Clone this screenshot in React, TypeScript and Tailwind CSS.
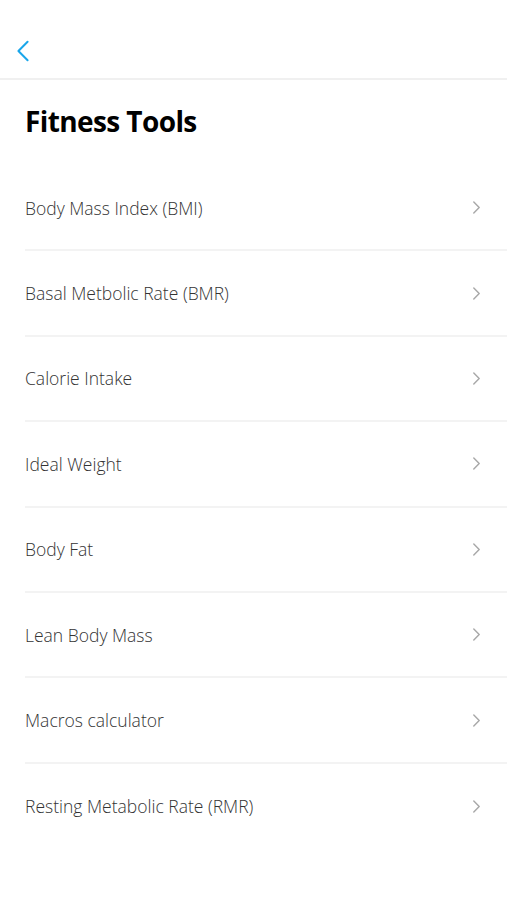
const tools = [
  "Body Mass Index (BMI)",
  "Basal Metbolic Rate (BMR)",
  "Calorie Intake",
  "Ideal Weight",
  "Body Fat",
  "Lean Body Mass",
  "Macros calculator",
  "Resting Metabolic Rate (RMR)",
];

function Chevron({ className }: { className?: string }) {
  return (
    <svg viewBox="0 0 10 16" className={className} fill="none" stroke="currentColor" strokeWidth={1.6} strokeLinecap="round" strokeLinejoin="round">
      <path d="M2 2l6 6-6 6" />
    </svg>
  );
}

export default function App() {
  return (
    <div className="min-h-[900px] w-full bg-white font-['Open_Sans',sans-serif]">
      <header className="flex h-[80px] items-center border-b-2 border-[#f0f0f0] pl-[16px]">
        <svg viewBox="0 0 14 24" className="mt-[24px] h-[22px] w-[14px] text-[#1aa6ea]" fill="none" stroke="currentColor" strokeWidth={2.2} strokeLinecap="round" strokeLinejoin="round">
          <path d="M12 2L2 12l10 10" />
        </svg>
      </header>

      <h1 className="pl-[25px] pt-[23px] text-[28px] font-bold leading-[36px] tracking-[-0.6px] text-black">
        Fitness Tools
      </h1>

      <ul className="ml-[25px] mt-[27px]">
        {tools.map((t, i) => (
          <li
            key={t}
            className={`flex h-[85.4px] items-center justify-between pr-[26px] ${
              i < tools.length - 1 ? "border-b-2 border-[#f3f3f3]" : ""
            }`}
          >
            <span className="text-[17.5px] font-light text-[#333]">{t}</span>
            <Chevron className="h-[15px] w-[9px] text-[#a8a8a8]" />
          </li>
        ))}
      </ul>
    </div>
  );
}
